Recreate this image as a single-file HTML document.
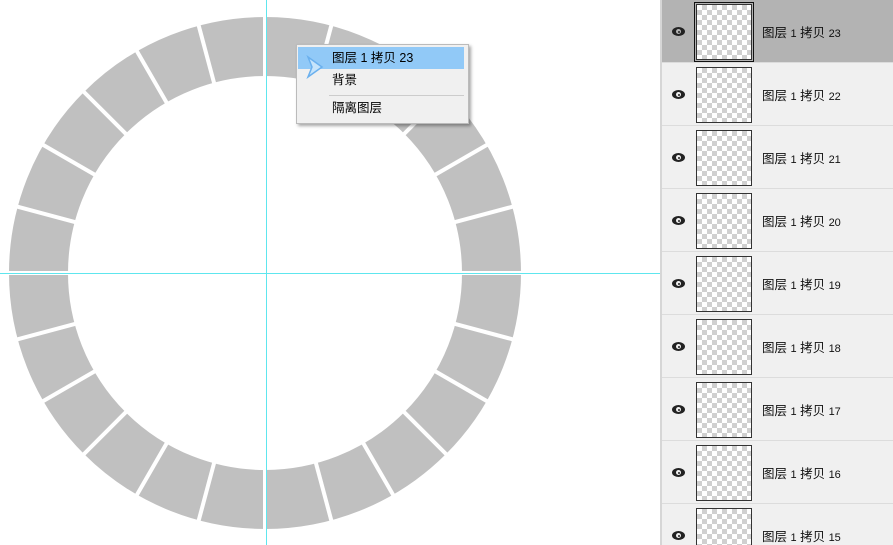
<!DOCTYPE html>
<html><head><meta charset="utf-8"><style>
html,body{margin:0;width:893px;height:545px;overflow:hidden}
body{background:#fff;position:relative;font-family:"Liberation Sans","Noto Sans CJK SC",sans-serif}
#panel{position:absolute;left:660px;top:0;width:233px;height:545px;background:#f0f0f0;border-left:2px solid #d6d6d6;box-sizing:border-box;overflow:hidden}
.row{position:absolute;left:0;width:233px;height:62px;border-bottom:1px solid #dcdcdc}
.row.sel{background:#b3b3b3}
.eye{position:absolute;left:10px;top:27px;width:13px;height:9px;border-radius:50%;background:#222}
.eye:after{content:"";position:absolute;left:4px;top:2px;width:5px;height:5px;border-radius:50%;background:#f0f0f0}
.eye:before{content:"";position:absolute;left:5.5px;top:3.5px;width:2px;height:2px;border-radius:50%;background:#222;z-index:1}
.row.sel .eye:after{background:#b3b3b3}
.th{position:absolute;left:34px;top:4px;width:54px;height:54px;border:1px solid #333;background-color:#fff;background-image:linear-gradient(45deg,#d0d0d0 25%,transparent 25%,transparent 75%,#d0d0d0 75%),linear-gradient(45deg,#d0d0d0 25%,transparent 25%,transparent 75%,#d0d0d0 75%);background-size:10px 10px;background-position:0 0,5px 5px}
.sel .th{outline:1px solid #111;outline-offset:1px}
.lb{position:absolute;left:100px;top:22px;font-size:12.5px;color:#111;white-space:nowrap}
.lb small{font-size:11px}
#menu{position:absolute;left:296px;top:44px;width:171px;height:78px;background:#f0f0f0;border:1px solid #bbb;box-shadow:2px 2px 3px rgba(0,0,0,.35);font-size:12.5px;color:#000}
#menu .it{position:absolute;left:1px;width:166px;height:22px;line-height:22px;padding-left:34px;box-sizing:border-box}
</style></head><body>
<svg width="660" height="545" style="position:absolute;left:0;top:0">
<circle cx="265" cy="273" r="226.5" fill="none" stroke="#c0c0c0" stroke-width="59"/>
<g id="gaps" stroke="#fff" stroke-width="4"></g>
<rect x="266" y="0" width="1" height="545" fill="#5ee6ee"/>
<rect x="0" y="273" width="660" height="1" fill="#5ee6ee"/>
</svg>
<div id="menu">
<div class="it" style="top:2px;background:#91c9f7">图层 1 拷贝 23</div>
<div class="it" style="top:24px">背景</div>
<div style="position:absolute;left:32px;right:4px;top:50px;border-top:1px solid #ccc"></div>
<div class="it" style="top:52px">隔离图层</div>
<svg width="20" height="24" style="position:absolute;left:8px;top:10px"><path d="M3 2 L17 12 L3 22 L7 12 Z" fill="#c6e4fb" stroke="#6ab0ee" stroke-width="1.5"/></svg>
</div>
<div id="panel"></div>
<script>
var g=document.getElementById('gaps'),s='';
for(var i=0;i<24;i++){var a=i*Math.PI/12;var x1=265+190*Math.sin(a),y1=273-190*Math.cos(a),x2=265+262*Math.sin(a),y2=273-262*Math.cos(a);s+='<line x1="'+x1+'" y1="'+y1+'" x2="'+x2+'" y2="'+y2+'"/>';}
g.innerHTML=s;
var p=document.getElementById('panel'),h='';
for(var i=0;i<9;i++){h+='<div class="row'+(i==0?' sel':'')+'" style="top:'+(i*63)+'px"><div class="eye"></div><div class="th"></div><div class="lb">图层 <small>1</small> 拷贝 <small>'+(23-i)+'</small></div></div>';}
p.innerHTML=h;
</script>
</body></html>
